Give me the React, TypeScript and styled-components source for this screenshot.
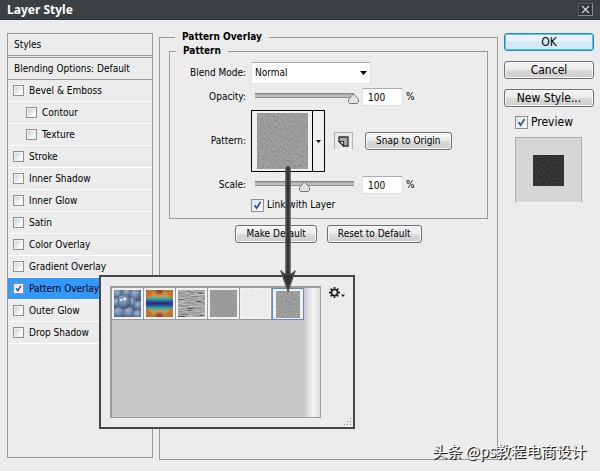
import React from "react";
import styled, { createGlobalStyle, css } from "styled-components";

const uiFont = '"DejaVu Sans Condensed", "Noto Sans", sans-serif';
const line = "#9a9a9a";

const svgUrl = (svg: string) => `url("data:image/svg+xml,${encodeURIComponent(svg)}")`;

const tick = svgUrl(
  '<svg xmlns="http://www.w3.org/2000/svg" viewBox="0 0 11 11"><path d="M2.6 5.2 4.6 8.2 8.6 2" fill="none" stroke="#3a5290" stroke-width="1.8"/></svg>'
);
const caret = svgUrl(
  '<svg xmlns="http://www.w3.org/2000/svg" width="7" height="4"><path d="M0 0H7L3.500 4Z" fill="#000"/></svg>'
);
const thumb = svgUrl(
  '<svg xmlns="http://www.w3.org/2000/svg" width="11" height="11"><path d="M5.500 .8 10.500 6.500V9.500L9.500 10.500H1.500L.5 9.500V6.500Z" fill="#e2e2e2" stroke="#777"/></svg>'
);

const GlobalStyle = createGlobalStyle`
  * { box-sizing: border-box; }
  body { margin: 0; background: #ececec; }
  button, input, select { font: inherit; color: inherit; margin: 0; }
`;

const Dialog = styled.div`
  position: relative;
  display: flex;
  flex-direction: column;
  min-height: 100vh;
  background: #ececec;
  color: #000;
  font: 10px/14px ${uiFont};
`;

const TitleBar = styled.header`
  display: flex;
  align-items: center;
  justify-content: space-between;
  height: 20px;
  padding: 0 7px;
  background: #3a4044;
  border-bottom: 1px solid #2e3336;
`;

const Title = styled.h1`
  margin: 0;
  color: #fff;
  font: bold 12px/18px "Noto Sans", sans-serif;
`;

const CloseButton = styled.button`
  display: grid;
  place-items: center;
  width: 15px;
  height: 13px;
  padding: 0;
  background: #2f3437;
  border: 1px solid #8a8d8f;
  border-top-color: #55595c;
  border-left-color: #55595c;
`;

const Body = styled.div`
  flex: 1;
  display: grid;
  grid-template-columns: 146px minmax(0, 1fr) 90px;
  column-gap: 6px;
  padding: 10px 6px 11px 7px;
`;

const StyleList = styled.nav`
  margin: 3px 0 2px;
  border: 1px solid ${line};
`;

const ListHeading = styled.div<{ $double?: boolean }>`
  height: ${(p) => (p.$double ? 24 : 22)}px;
  padding: 4px 6px;
  border-bottom: ${(p) => (p.$double ? 3 : 1)}px ${(p) => (p.$double ? "double" : "solid")} ${line};
`;

const CheckLabel = styled.label`
  display: flex;
  align-items: center;
  gap: 3px;
`;

const StyleRow = styled(CheckLabel)<{ $indent?: boolean; $active?: boolean }>`
  height: 22px;
  gap: 5px;
  padding-left: ${(p) => (p.$indent ? 18 : 5)}px;
  border-bottom: 1px solid #fff;
  ${(p) => p.$active && css`background: #3399ff;`}
`;

const CheckBox = styled.input.attrs({ type: "checkbox" })<{ $large?: boolean }>`
  appearance: none;
  flex: none;
  width: ${(p) => (p.$large ? 13 : 11)}px;
  height: ${(p) => (p.$large ? 13 : 11)}px;
  border: 1px solid #8e8f8f;
  background: linear-gradient(135deg, #c9cdd4, #fafafa 75%) content-box, #f6f6f6;
  padding: 1px;
  &:checked {
    background: ${tick} center / 100% no-repeat, linear-gradient(135deg, #dfe3ee, #fff);
  }
`;

const Main = styled.main`
  display: flex;
  min-width: 0;
`;

const Group = styled.fieldset`
  flex: 1;
  min-width: 0;
  margin: 0;
  padding: 0 9px;
  border: 1px solid ${line};
`;

const Legend = styled.legend`
  margin-left: 6px;
  padding: 0 7px;
  font-weight: bold;
`;

const InnerGroup = styled(Group)`
  padding: 0 0 6px;
`;

const Settings = styled.div`
  display: grid;
  grid-template-columns: 76px minmax(0, 1fr);
  column-gap: 5px;
  row-gap: 4px;
  align-items: center;
  padding-top: 4px;
`;

const FieldLabel = styled.label`
  text-align: right;
  white-space: nowrap;
`;

const Controls = styled.div`
  grid-column: 2;
  display: flex;
  align-items: center;
`;

const BlendSelect = styled.select`
  appearance: none;
  width: 120px;
  height: 22px;
  padding: 0 20px 0 3px;
  border: 1px solid #e2e3ea;
  border-top-color: #abadb3;
  border-radius: 0;
  background: #fff ${caret} right 3px center no-repeat;
`;

const Slider = styled.input.attrs({ type: "range" })`
  appearance: none;
  width: 110px;
  height: 18px;
  margin-left: -2px;
  background: linear-gradient(#858585 0 1px, #a9a9a9 1px 2px, #bdbdbd 2px 4px, #8f8f8f 4px) center 5px / 99px 5px no-repeat;
  &::-webkit-slider-thumb {
    appearance: none;
    width: 11px;
    height: 11px;
    margin-top: 2px;
    background: ${thumb} center no-repeat;
  }
`;

const NumberBox = styled.input`
  width: 41px;
  height: 18px;
  margin: 0 3px;
  padding: 0 5px;
  border: 1px solid #e2e3ea;
  border-top-color: #abadb3;
  background: #fff;
`;

const PatternPicker = styled.button`
  display: grid;
  grid-template-columns: 1fr 11px;
  width: 74px;
  height: 62px;
  padding: 0;
  border: 1px solid #000;
  background: #f0f0f0;
`;

const PickerArt = styled.span`
  display: grid;
  place-items: center;
  border-right: 1px solid #000;
`;

const PickerCaret = styled.span`
  display: grid;
  place-items: center;
`;

const PresetButton = styled.button`
  display: grid;
  place-items: center;
  width: 19px;
  height: 18px;
  margin: 0 12px 0 9px;
  padding: 0;
  border: 1px solid #b5b5b5;
  border-bottom-color: #fff;
  background: #e9e9e9;
`;

const PushButton = styled.button<{ $large?: boolean; $primary?: boolean }>`
  height: 18px;
  padding: 0 10px;
  border: 1px solid #707070;
  border-radius: 3px;
  background: linear-gradient(#f4f4f4, #ebebeb 50%, #dadada 50%, #cfcfcf);
  box-shadow: inset 0 0 0 1px #f8f8f8;
  white-space: nowrap;
  line-height: 14px;
  ${(p) => p.$large && css`font-size: 12px; padding: 0;`}
  ${(p) =>
    p.$primary &&
    css`
      border-color: #3c7fb1;
      background: linear-gradient(#eef6fa, #e2f0f7 50%, #cfe6f2 50%, #d3eaf5);
      box-shadow: inset 0 0 0 1px #48cbf3;
    `}
`;

const ButtonRow = styled.div`
  display: flex;
  justify-content: center;
  gap: 10px;
  margin-top: 6px;
`;

const Side = styled.aside`
  display: flex;
  flex-direction: column;
  gap: 8px;
  padding-top: 3px;
`;

const ActionStack = styled.div`
  display: grid;
  gap: 10px;
`;

const PreviewGroup = styled.div`
  display: grid;
  gap: 8px;
  padding-left: 11px;
  font-size: 12px;
`;

const PreviewPane = styled.div`
  display: grid;
  place-items: center;
  width: 67px;
  height: 66px;
  background: #d6d6d6;
  border: 1px solid #ababab;
  border-bottom-color: #f5f5f5;
`;

const Popup = styled.section`
  position: absolute;
  left: 99px;
  top: 275px;
  display: flex;
  gap: 8px;
  padding: 9px;
  width: 256px;
  height: 154px;
  border: 2px solid #464646;
  background: #ececec;
`;

const SwatchBox = styled.div`
  display: grid;
  grid-template-columns: 1fr 16px;
  width: 212px;
  height: 132px;
  border: 1px solid #9d9d9d;
  border-top-width: 2px;
  border-left-width: 2px;
  background: #c6c6c6;
`;

const Swatches = styled.div`
  display: flex;
  align-items: flex-start;
`;

const Swatch = styled.button<{ $selected?: boolean }>`
  display: grid;
  place-items: center;
  width: 32px;
  height: 32px;
  padding: 0;
  border: solid ${line};
  border-width: 0 1px 1px 0;
  background: #f1f1f1;
  ${(p) => p.$selected && css`border: 1px solid #5a8ad6;`}
`;

const ScrollStrip = styled.div`
  background: linear-gradient(90deg, #c6c6c6, #e2e2e2 30%, #f6f6f6 60%, #dcdcdc);
`;

const MenuButton = styled.button`
  width: 16px;
  height: 12px;
  padding: 0;
  margin-top: 1px;
  border: 0;
  background: none;
  & svg { display: block; }
`;

const Grip = styled.svg`
  position: absolute;
  right: 1px;
  bottom: 1px;
`;

const Pointer = styled.svg`
  position: absolute;
  left: 279px;
  top: 165px;
  pointer-events: none;
`;

const Credit = styled.div`
  position: absolute;
  right: 14px;
  bottom: 9px;
  color: #fff;
  font: 15px/22px "Noto Sans CJK SC", sans-serif;
  text-shadow: 1px 1px 0 #222, 1px 1px 1px #333;
`;

type Kind = "bubbles" | "tiedye" | "lines" | "grain" | "paper" | "rough" | "dark";

const textures: Record<string, { base: string; freq: string; ink: number; slope: number }> = {
  lines: { base: "#a4a4a4", freq: "0.12 0.9", ink: 0.45, slope: 2.5 },
  grain: { base: "#979797", freq: "0.8", ink: 0.25, slope: 1 },
  paper: { base: "#f3f3f3", freq: "0.4", ink: 0.08, slope: 1.5 },
  rough: { base: "#979797", freq: "0.8 0.4", ink: 0.3, slope: 1.5 },
  dark: { base: "#202020", freq: "0.6", ink: 0.15, slope: 2 },
};

function Texture({ kind, width, height }: { kind: Kind; width: number; height: number }) {
  const id = `tex-${kind}-${width}`;
  if (kind === "bubbles") {
    const balls = [
      [4, 4, 5], [13, 3, 5], [22, 5, 6], [3, 13, 5], [18, 13, 5], [25, 16, 5],
      [5, 23, 6], [15, 23, 6], [24, 25, 5], [10, 12, 7],
    ];
    return (
      <svg width={width} height={height} viewBox="0 0 27 27" aria-hidden="true">
        <defs>
          <radialGradient id={id} cx=".4" cy=".3" r=".75">
            <stop offset="0" stopColor="#a0b4d0" />
            <stop offset=".5" stopColor="#6a82a6" />
            <stop offset="1" stopColor="#3c4e68" />
          </radialGradient>
        </defs>
        <rect width="27" height="27" fill="#4c607f" />
        {balls.map(([x, y, r]) => (
          <circle key={`${x}-${y}`} cx={x} cy={y} r={r} fill={`url(#${id})`} />
        ))}
        <circle cx="7" cy="10" r="1" fill="#fff" />
        <circle cx="11" cy="9" r="1.500" fill="#fff" />
      </svg>
    );
  }
  if (kind === "tiedye") {
    return (
      <svg width={width} height={height} viewBox="0 0 27 27" aria-hidden="true">
        <defs>
          <linearGradient id={id} x1="0" y1="0" x2="0" y2="1">
            <stop offset="0" stopColor="#a0873a" />
            <stop offset=".2" stopColor="#cfa03e" />
            <stop offset=".3" stopColor="#57a893" />
            <stop offset=".38" stopColor="#2a80b0" />
            <stop offset=".5" stopColor="#2a2470" />
            <stop offset=".62" stopColor="#2a80b0" />
            <stop offset=".7" stopColor="#57a893" />
            <stop offset=".8" stopColor="#cfa03e" />
            <stop offset="1" stopColor="#a0873a" />
          </linearGradient>
          <filter id={`${id}-soft`}>
            <feGaussianBlur stdDeviation="1" />
          </filter>
        </defs>
        <rect width="27" height="27" fill={`url(#${id})`} />
        <g filter={`url(#${id}-soft)`}>
          <path d="M9 -2H18L16 4H11ZM9 29H18L16 23H11Z" fill="#a83832" />
          <path d="M0 4 5 0 8 0 3 7 0 8ZM27 4 22 0 19 0 24 7 27 8ZM0 23 5 27 8 27 3 20 0 19ZM27 23 22 27 19 27 24 20 27 19Z" fill="#d4602f" />
          <path d="M-2-2H4L-2 4ZM29-2H23L29 4ZM-2 29H4L-2 23ZM29 29H23L29 23Z" fill="#3d7a4a" />
          <path d="M0 11 8 13.500 0 16ZM27 11 19 13.500 27 16Z" fill="#43318c" />
        </g>
      </svg>
    );
  }
  const t = textures[kind];
  return (
    <svg width={width} height={height} aria-hidden="true">
      <filter id={id} x="0" y="0" width="100%" height="100%">
        <feTurbulence type="fractalNoise" baseFrequency={t.freq} numOctaves="3" seed="4" />
        <feColorMatrix values="0.33 0.33 0.33 0 0 0.33 0.33 0.33 0 0 0.33 0.33 0.33 0 0 0 0 0 0 1" />
        <feComponentTransfer>
          <feFuncR type="linear" slope={t.slope} intercept={0.4 - t.slope / 2} />
          <feFuncG type="linear" slope={t.slope} intercept={0.4 - t.slope / 2} />
          <feFuncB type="linear" slope={t.slope} intercept={0.4 - t.slope / 2} />
        </feComponentTransfer>
      </filter>
      <rect width="100%" height="100%" fill={t.base} />
      <rect width="100%" height="100%" filter={`url(#${id})`} opacity={t.ink} />
    </svg>
  );
}

const effects: { name: string; indent?: boolean; on?: boolean }[] = [
  { name: "Bevel & Emboss" },
  { name: "Contour", indent: true },
  { name: "Texture", indent: true },
  { name: "Stroke" },
  { name: "Inner Shadow" },
  { name: "Inner Glow" },
  { name: "Satin" },
  { name: "Color Overlay" },
  { name: "Gradient Overlay" },
  { name: "Pattern Overlay", on: true },
  { name: "Outer Glow" },
  { name: "Drop Shadow" },
];

const presets: Kind[] = ["bubbles", "tiedye", "lines", "grain", "paper", "rough"];

const gearTeeth = [0, 45, 90, 135, 180, 225, 270, 315];

export default function App() {
  return (
    <Dialog role="dialog" aria-labelledby="dialog-title">
      <GlobalStyle />
      <TitleBar>
        <Title id="dialog-title">Layer Style</Title>
        <CloseButton type="button" aria-label="Close">
          <svg width="9" height="9" viewBox="0 0 9 9">
            <path d="M1 1 8 8M8 1 1 8" stroke="#d4d6d7" strokeWidth="1.300" />
          </svg>
        </CloseButton>
      </TitleBar>
      <Body>
        <StyleList aria-label="Styles">
          <ListHeading $double>Styles</ListHeading>
          <ListHeading>Blending Options: Default</ListHeading>
          {effects.map((e) => (
            <StyleRow key={e.name} $indent={e.indent} $active={e.on}>
              <CheckBox defaultChecked={e.on} />
              {e.name}
            </StyleRow>
          ))}
        </StyleList>
        <Main>
          <Group>
            <Legend>Pattern Overlay</Legend>
            <InnerGroup>
              <Legend>Pattern</Legend>
              <Settings>
                <FieldLabel htmlFor="blend">Blend Mode:</FieldLabel>
                <Controls>
                  <BlendSelect id="blend" defaultValue="Normal">
                    <option>Normal</option>
                  </BlendSelect>
                </Controls>
                <FieldLabel htmlFor="opacity">Opacity:</FieldLabel>
                <Controls>
                  <Slider aria-label="Opacity" min={0} max={100} defaultValue={100} />
                  <NumberBox id="opacity" defaultValue="100" />%
                </Controls>
                <FieldLabel htmlFor="pattern">Pattern:</FieldLabel>
                <Controls>
                  <PatternPicker id="pattern" type="button">
                    <PickerArt>
                      <Texture kind="rough" width={51} height={56} />
                    </PickerArt>
                    <PickerCaret>
                      <svg width="5" height="3" viewBox="0 0 5 3">
                        <path d="M0 0H5L2.500 3Z" />
                      </svg>
                    </PickerCaret>
                  </PatternPicker>
                  <PresetButton type="button" aria-label="New preset">
                    <svg width="11" height="11" viewBox="0 0 11 11">
                      <path d="M1 1H10V10H5.500L1 5.500Z" fill="#a8a8a8" stroke="#333" strokeWidth="1.300" />
                      <path d="M1 5.500H5.500V10Z" fill="#eee" stroke="#333" strokeWidth="1.100" />
                    </svg>
                  </PresetButton>
                  <PushButton type="button">Snap to Origin</PushButton>
                </Controls>
                <FieldLabel htmlFor="scale">Scale:</FieldLabel>
                <Controls>
                  <Slider aria-label="Scale" min={0} max={200} defaultValue={100} />
                  <NumberBox id="scale" defaultValue="100" />%
                </Controls>
                <Controls>
                  <CheckLabel>
                    <CheckBox $large defaultChecked />
                    Link with Layer
                  </CheckLabel>
                </Controls>
              </Settings>
            </InnerGroup>
            <ButtonRow>
              <PushButton type="button">Make Default</PushButton>
              <PushButton type="button">Reset to Default</PushButton>
            </ButtonRow>
          </Group>
        </Main>
        <Side>
          <ActionStack>
            <PushButton type="button" $large $primary>OK</PushButton>
            <PushButton type="button" $large>Cancel</PushButton>
            <PushButton type="button" $large>New Style...</PushButton>
          </ActionStack>
          <PreviewGroup>
            <CheckLabel>
              <CheckBox $large defaultChecked />
              Preview
            </CheckLabel>
            <PreviewPane>
              <Texture kind="dark" width={31} height={31} />
            </PreviewPane>
          </PreviewGroup>
        </Side>
      </Body>
      <Popup aria-label="Pattern presets">
        <SwatchBox>
          <Swatches>
            {presets.map((kind) => (
              <Swatch key={kind} type="button" aria-label={kind} $selected={kind === "rough"}>
                <Texture kind={kind} width={kind === "rough" ? 24 : 27} height={27} />
              </Swatch>
            ))}
          </Swatches>
          <ScrollStrip />
        </SwatchBox>
        <MenuButton type="button" aria-label="Preset menu">
          <svg width="16" height="12" viewBox="0 0 16 12">
            <circle cx="5.500" cy="5.500" r="3" fill="none" stroke="#222" strokeWidth="1.600" />
            {gearTeeth.map((a) => (
              <path key={a} d="M5.500 0V2.500" stroke="#222" strokeWidth="1.800" transform={`rotate(${a} 5.500 5.500)`} />
            ))}
            <path d="M12 7.500H16L14 10Z" fill="#222" />
          </svg>
        </MenuButton>
        <Grip width="9" height="9" viewBox="0 0 9 9" aria-hidden="true">
          <path d="M7 1h1v1h-1zM7 4h1v1h-1zM4 4h1v1h-1zM7 7h1v1h-1zM4 7h1v1h-1zM1 7h1v1h-1z" fill="#888" />
        </Grip>
      </Popup>
      <Pointer width="18" height="128" viewBox="0 0 18 128" aria-hidden="true">
        <path
          d="M7 3Q9 0 11 3V109Q14 109 16 106L9 126 2 106Q4 109 7 109Z"
          fill="#333"
          stroke="#555"
          strokeWidth="1.500"
          strokeLinejoin="round"
        />
      </Pointer>
      <Credit>头条 @ps教程电商设计</Credit>
    </Dialog>
  );
}
